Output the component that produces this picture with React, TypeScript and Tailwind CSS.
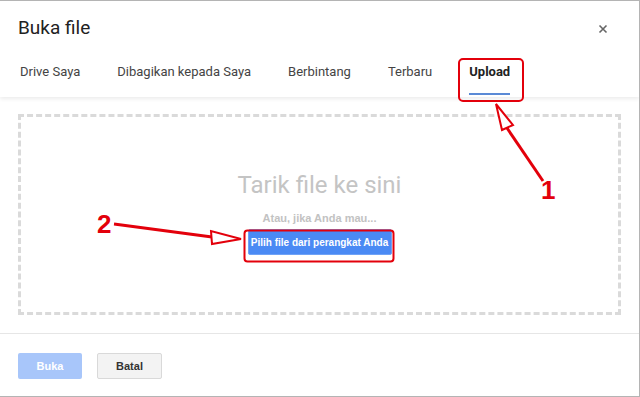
import React from "react";

const tabs = [
  { label: "Drive Saya", active: false },
  { label: "Dibagikan kepada Saya", active: false },
  { label: "Berbintang", active: false },
  { label: "Terbaru", active: false },
  { label: "Upload", active: true },
];

export default function App() {
  return (
    <div className="relative w-[640px] h-[397px] overflow-hidden bg-white border-t border-r border-b border-[#b4b4b4] font-['Roboto',sans-serif]">
      <div className="flex flex-col h-full">
        {/* Header */}
        <div className="relative z-10 h-[96px] bg-white shadow-[0_2px_4px_rgba(0,0,0,0.08)] flex flex-col">
          <div className="flex items-center justify-between pl-[18px] pr-[31px] pt-[14px]">
            <h1 className="text-[19px] leading-[26px] text-[#222]">Buka file</h1>
            <svg width="10" height="10" viewBox="0 0 10 10" className="mt-[1px]">
              <path d="M1.5 1.5 L8.5 8.5 M8.5 1.5 L1.5 8.5" stroke="#666" strokeWidth="1.6" />
            </svg>
          </div>
          <div className="flex items-end h-[55px] pl-[16px] gap-[29px]">
            {tabs.map((t) => (
              <div
                key={t.label}
                className={`px-[4px] h-[34px] flex flex-col justify-between text-[13px] leading-[20px] ${
                  t.active ? "font-bold text-[#222]" : "text-[#444]"
                }`}
              >
                <span>{t.label}</span>
                <span className={`h-[2px] mb-[1px] ${t.active ? "bg-[#5a8ad6]" : "bg-transparent"}`} />
              </div>
            ))}
          </div>
        </div>

        {/* Drop zone */}
        <div className="px-[18px] pt-[17px]">
          <div className="h-[201px] border-[3px] border-dashed border-[#dadada] flex flex-col items-center">
            <div className="mt-[54px] text-[24px] leading-[28px] text-[#c4c4c4]">Tarik file ke sini</div>
            <div className="mt-[12px] text-[11px] leading-[14px] font-bold text-[#c2c2c2] font-['Liberation_Sans',sans-serif]">
              Atau, jika Anda mau...
            </div>
            <button className="mt-[4px] h-[26px] w-[144px] rounded-[2px] bg-[#4a8af4] border border-[#6fa2f6] text-white text-[10px] font-bold font-['Liberation_Sans',sans-serif]">
              Pilih file dari perangkat Anda
            </button>
          </div>
        </div>

        {/* Footer */}
        <div className="mt-[18px] border-t border-[#e6e6e6] flex gap-[15px] px-[18px] pt-[19px]">
          <button className="w-[64px] h-[26px] rounded-[2px] bg-[#a8c6fa] text-white text-[11px] font-bold font-['Liberation_Sans',sans-serif]">
            Buka
          </button>
          <button className="w-[65px] h-[26px] rounded-[2px] bg-[#f3f3f3] border border-[#d9d9d9] text-[#333] text-[11px] font-bold font-['Liberation_Sans',sans-serif]">
            Batal
          </button>
        </div>
      </div>

      {/* Annotations */}
      <svg className="absolute inset-0 pointer-events-none z-20" width="640" height="397">
        <rect x="459" y="58" width="64" height="42" rx="4" fill="none" stroke="#e3000b" strokeWidth="2" />
        <rect x="244.5" y="229.5" width="149" height="31" rx="3" fill="none" stroke="#e3000b" strokeWidth="2" />
        <line x1="543" y1="180" x2="507" y2="127" stroke="#e3000b" strokeWidth="3" />
        <polygon points="496,103 502,129 513,124" fill="white" stroke="#e3000b" strokeWidth="2" strokeLinejoin="miter" />
        <line x1="114" y1="223" x2="212" y2="236" stroke="#e3000b" strokeWidth="3" />
        <polygon points="241,238 211,230 212,243" fill="white" stroke="#e3000b" strokeWidth="2" />
      </svg>
      <span className="absolute z-30 left-[541px] top-[174px] text-[26px] leading-[30px] font-bold text-[#e3000b] font-['Liberation_Sans',sans-serif]">
        1
      </span>
      <span className="absolute z-30 left-[97px] top-[208px] text-[26px] leading-[30px] font-bold text-[#e3000b] font-['Liberation_Sans',sans-serif]">
        2
      </span>
    </div>
  );
}
